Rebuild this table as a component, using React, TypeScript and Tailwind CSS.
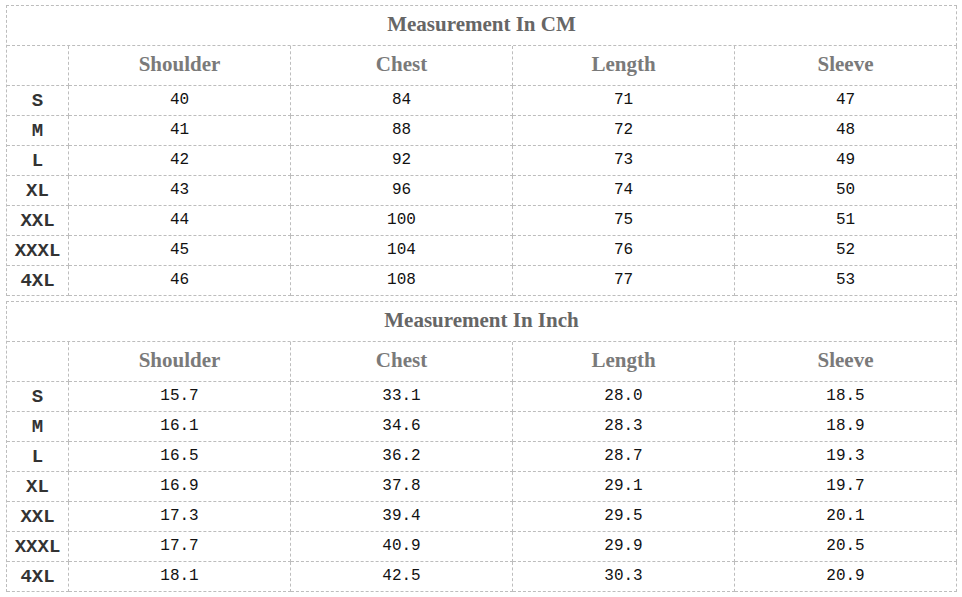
import React from "react";

const cols = ["Shoulder", "Chest", "Length", "Sleeve"];
const sizes = ["S", "M", "L", "XL", "XXL", "XXXL", "4XL"];

const cm = [
  ["40", "84", "71", "47"],
  ["41", "88", "72", "48"],
  ["42", "92", "73", "49"],
  ["43", "96", "74", "50"],
  ["44", "100", "75", "51"],
  ["45", "104", "76", "52"],
  ["46", "108", "77", "53"],
];

const inch = [
  ["15.7", "33.1", "28.0", "18.5"],
  ["16.1", "34.6", "28.3", "18.9"],
  ["16.5", "36.2", "28.7", "19.3"],
  ["16.9", "37.8", "29.1", "19.7"],
  ["17.3", "39.4", "29.5", "20.1"],
  ["17.7", "40.9", "29.9", "20.5"],
  ["18.1", "42.5", "30.3", "20.9"],
];

const cell = "border-r border-b border-dashed border-[#bdbdbd] flex items-center justify-center";
const serif = "font-['Liberation_Serif','Times_New_Roman',serif]";
const mono = "font-['Liberation_Mono','Courier_New',monospace]";

function SizeTable({ title, data }: { title: string; data: string[][] }) {
  return (
    <div className="grid w-[951px] grid-cols-[62px_222px_222px_222px_222px] border-l border-t border-dashed border-[#bdbdbd]">
      <div className={`${cell} ${serif} col-span-5 h-[40px] pb-[1px] text-[21px] font-bold text-[#666666]`}>
        {title}
      </div>
      <div className={`${cell} h-[40px]`} />
      {cols.map((c) => (
        <div key={c} className={`${cell} ${serif} h-[40px] pb-[2px] text-[21px] font-bold text-[#7a7a7a]`}>
          {c}
        </div>
      ))}
      {data.map((row, i) => (
        <React.Fragment key={i}>
          <div className={`${cell} ${mono} h-[30px] pt-[2px] text-[19px] font-bold text-[#333333]`}>
            {sizes[i]}
          </div>
          {row.map((v, j) => (
            <div key={j} className={`${cell} ${mono} h-[30px] pb-[1px] text-[16px] text-[#111111]`}>
              {v}
            </div>
          ))}
        </React.Fragment>
      ))}
    </div>
  );
}

export default function App() {
  return (
    <div className="w-[962px] h-[597px] bg-white pl-[6px] pt-[5px] flex flex-col gap-[5px]">
      <SizeTable title="Measurement In CM" data={cm} />
      <SizeTable title="Measurement In Inch" data={inch} />
    </div>
  );
}
